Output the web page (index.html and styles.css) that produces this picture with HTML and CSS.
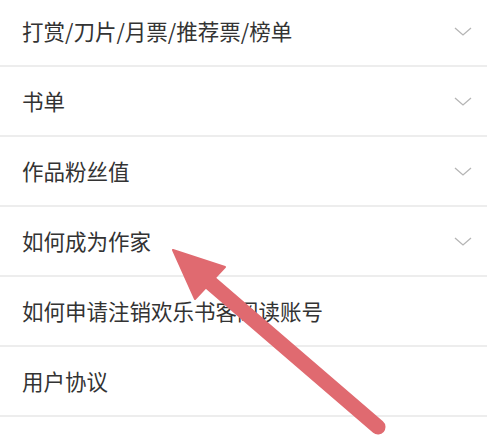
FILE: index.html
```html
<!DOCTYPE html>
<html lang="zh">
<head>
<meta charset="utf-8">
<link rel="stylesheet" href="styles.css">
</head>
<body>
<div class="page">
  <ul class="list">
    <li class="row"><span class="label">打赏/刀片/月票/推荐票/榜单</span><svg class="chev" viewBox="0 0 18 9" width="18" height="9"><path d="M1 1 L9 8 L17 1" fill="none" stroke="#b5b5b5" stroke-width="1.3"/></svg></li>
    <li class="row"><span class="label">书单</span><svg class="chev" viewBox="0 0 18 9" width="18" height="9"><path d="M1 1 L9 8 L17 1" fill="none" stroke="#b5b5b5" stroke-width="1.3"/></svg></li>
    <li class="row"><span class="label">作品粉丝值</span><svg class="chev" viewBox="0 0 18 9" width="18" height="9"><path d="M1 1 L9 8 L17 1" fill="none" stroke="#b5b5b5" stroke-width="1.3"/></svg></li>
    <li class="row"><span class="label">如何成为作家</span><svg class="chev" viewBox="0 0 18 9" width="18" height="9"><path d="M1 1 L9 8 L17 1" fill="none" stroke="#b5b5b5" stroke-width="1.3"/></svg></li>
    <li class="row"><span class="label">如何申请注销欢乐书客阅读账号</span></li>
    <li class="row"><span class="label">用户协议</span></li>
    <li class="row"><span class="label"></span></li>
  </ul>
  <svg class="arrow" viewBox="0 0 487 435" width="487" height="435">
    <line x1="206" y1="279" x2="378" y2="427" stroke="#e06a70" stroke-width="15" stroke-linecap="round"/>
    <polygon points="173,250 225,267 195,299" fill="#e06a70" stroke="#e06a70" stroke-width="2" stroke-linejoin="round"/>
  </svg>
</div>
</body>
</html>
```
FILE: styles.css
```css
html, body {
  margin: 0;
  padding: 0;
  background: #ffffff;
}
.page {
  position: relative;
  width: 487px;
  height: 435px;
  overflow: hidden;
}
.list {
  list-style: none;
  margin: -3px 0 0 0;
  padding: 0;
}
.row {
  height: 68px;
  border-bottom: 2px solid #ededed;
  display: flex;
  align-items: center;
  justify-content: space-between;
  padding: 0 15px 0 22px;
}
.label {
  font-family: "Noto Sans CJK SC", "Noto Sans", sans-serif;
  font-size: 21.5px;
  color: #333333;
  line-height: 1;
}
.chev {
  display: block;
}
.arrow {
  position: absolute;
  left: 0;
  top: 0;
  pointer-events: none;
}
```
